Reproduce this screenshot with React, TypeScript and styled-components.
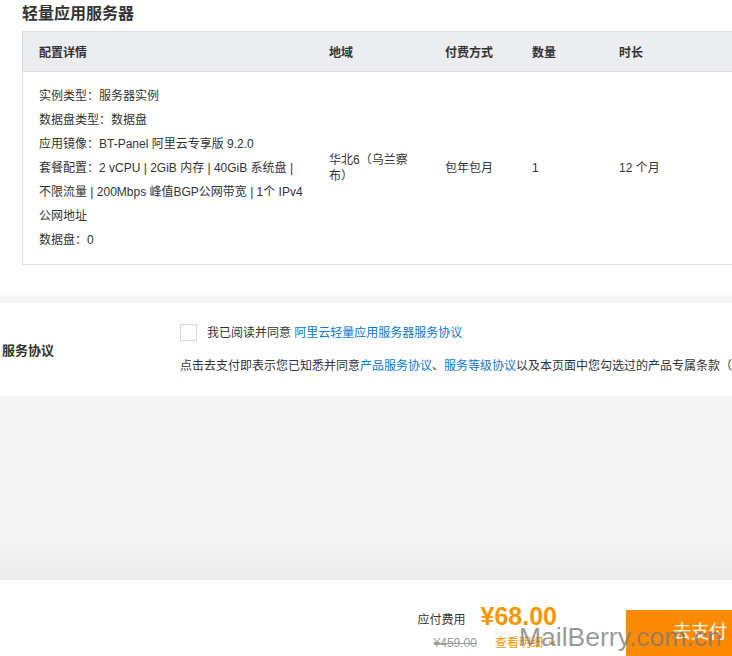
import { FC, ReactElement } from 'react';
import styled, { createGlobalStyle } from 'styled-components';

const GlobalStyle = createGlobalStyle`
  html, body {
    margin: 0;
    padding: 0;
    background: #f4f4f4;
  }
  body {
    font-family: "Liberation Sans", "Noto Sans CJK SC", sans-serif;
    color: #333;
  }
`;

const Page = styled.div`
  position: relative;
  width: 100%;
  height: 656px;
  overflow: hidden;
  display: flex;
  flex-direction: column;
  background: #f4f4f4;
`;

const OrderCard = styled.section`
  background: #fff;
  padding: 0 0 30px 22px;
`;

const Title = styled.h2`
  margin: 0;
  height: 31px;
  line-height: 28px;
  font-size: 16px;
  font-weight: 700;
  color: #333;
`;

const Table = styled.div`
  margin-right: -60px;
  border: 1px solid #ddd;
  border-right: none;
`;

const Row = styled.div<{ head?: boolean }>`
  display: grid;
  grid-template-columns: 290px 116px 87px 87px 1fr;
  padding-left: 16px;
  align-items: center;
  font-size: 12px;
  background: ${(p) => (p.head ? '#ebedf0' : '#fff')};
  font-weight: ${(p) => (p.head ? 700 : 400)};
  height: ${(p) => (p.head ? '39px' : 'auto')};
  border-bottom: ${(p) => (p.head ? '1px solid #ddd' : 'none')};
  padding-top: ${(p) => (p.head ? '0' : '12px')};
  padding-bottom: ${(p) => (p.head ? '0' : '12px')};
`;

const DetailList = styled.div`
  display: flex;
  flex-direction: column;
`;

const DetailLine = styled.div`
  line-height: 24px;
  height: 24px;
  white-space: nowrap;
`;

const Region = styled.div`
  width: 86px;
  line-height: 16px;
`;

const Cell = styled.div`
  line-height: 16px;
`;

const Gap = styled.div`
  height: 8px;
  background: linear-gradient(#f6f6f6, #f2f2f2);
`;

const AgreementCard = styled.section`
  background: #fff;
  height: 93px;
  display: flex;
  align-items: center;
`;

const AgreementLabel = styled.div`
  width: 181px;
  padding-left: 2px;
  font-size: 13px;
  font-weight: 700;
`;

const AgreementBody = styled.div`
  display: flex;
  flex-direction: column;
  gap: 16px;
  font-size: 12px;
  white-space: nowrap;
`;

const CheckRow = styled.label`
  display: flex;
  align-items: center;
  gap: 10px;
  line-height: 16px;
`;

const Checkbox = styled.span`
  width: 15px;
  height: 15px;
  border: 1px solid #d6d6d6;
  background: #fff;
`;

const Link = styled.a`
  color: #0a78c8;
  text-decoration: none;
`;

const Notice = styled.div`
  line-height: 18px;
  color: #333;
`;

const Filler = styled.div`
  flex: 1;
  background: linear-gradient(#f4f4f4 0, #f4f4f4 calc(100% - 40px), #ebebeb 100%);
`;

const Footer = styled.footer`
  background: #fff;
  height: 76px;
  flex-shrink: 0;
  display: flex;
  justify-content: flex-end;
  align-items: flex-start;
  padding-top: 22px;
  box-sizing: border-box;
  margin-right: -42px;
`;

const PriceBlock = styled.div`
  display: flex;
  flex-direction: column;
  align-items: flex-end;
  margin-right: 69px;
`;

const PriceRow = styled.div<{ gap: number }>`
  display: flex;
  align-items: center;
  gap: ${(p) => p.gap}px;
`;

const PriceLabel = styled.span`
  font-size: 12px;
  color: #333;
  padding-top: 4px;
`;

const Price = styled.span`
  font-size: 25px;
  font-weight: 700;
  color: #f39800;
  line-height: 28px;
`;

const OldPrice = styled.span`
  font-size: 12px;
  color: #999;
  text-decoration: line-through;
  line-height: 26px;
`;

const DetailToggle = styled.span`
  display: flex;
  align-items: center;
  gap: 4px;
  font-size: 12px;
  color: #f39800;
  line-height: 26px;
`;

const PayButton = styled.button`
  width: 148px;
  height: 52px;
  margin-top: 8px;
  border: none;
  background: #ff8a00;
  color: #fff;
  font-family: "Noto Sans CJK SC", sans-serif;
  font-size: 18px;
  padding: 0 0 12px;
`;

const Watermark = styled.div`
  position: absolute;
  left: 519px;
  top: 624px;
  font-size: 26.5px;
  line-height: 1;
  color: rgba(120, 120, 120, 0.75);
  pointer-events: none;
  white-space: nowrap;
`;

const details = [
  '实例类型：服务器实例',
  '数据盘类型：数据盘',
  '应用镜像：BT-Panel 阿里云专享版 9.2.0',
  '套餐配置：2 vCPU | 2GiB 内存 | 40GiB 系统盘 |',
  '不限流量 | 200Mbps 峰值BGP公网带宽 | 1个 IPv4',
  '公网地址',
  '数据盘：0',
];

const App: FC = (): ReactElement => {
  return (
    <>
      <GlobalStyle />
      <Page>
        <OrderCard>
          <Title>轻量应用服务器</Title>
          <Table>
            <Row head>
              <div>配置详情</div>
              <div>地域</div>
              <div>付费方式</div>
              <div>数量</div>
              <div>时长</div>
            </Row>
            <Row>
              <DetailList>
                {details.map((d) => (
                  <DetailLine key={d}>{d}</DetailLine>
                ))}
              </DetailList>
              <Region>华北6（乌兰察布）</Region>
              <Cell>包年包月</Cell>
              <Cell>1</Cell>
              <Cell>12 个月</Cell>
            </Row>
          </Table>
        </OrderCard>

        <Gap />

        <AgreementCard>
          <AgreementLabel>服务协议</AgreementLabel>
          <AgreementBody>
            <CheckRow>
              <Checkbox />
              <span>
                我已阅读并同意 <Link>阿里云轻量应用服务器服务协议</Link>
              </span>
            </CheckRow>
            <Notice>
              点击去支付即表示您已知悉并同意<Link>产品服务协议</Link>、
              <Link>服务等级协议</Link>以及本页面中您勾选过的产品专属条款（
            </Notice>
          </AgreementBody>
        </AgreementCard>

        <Filler />

        <Footer>
          <PriceBlock>
            <PriceRow gap={15}>
              <PriceLabel>应付费用</PriceLabel>
              <Price>¥68.00</Price>
            </PriceRow>
            <PriceRow gap={18}>
              <OldPrice>¥459.00</OldPrice>
              <DetailToggle>
                查看明细
                <svg width="10" height="10" viewBox="0 0 10 10">
                  <path d="M2 3.5 L5 6.5 L8 3.5" fill="none" stroke="#f39800" strokeWidth="1.2" />
                </svg>
              </DetailToggle>
            </PriceRow>
          </PriceBlock>
          <PayButton>去支付</PayButton>
        </Footer>

        <Watermark>MailBerry.com.cn</Watermark>
      </Page>
    </>
  );
};

export default App;
